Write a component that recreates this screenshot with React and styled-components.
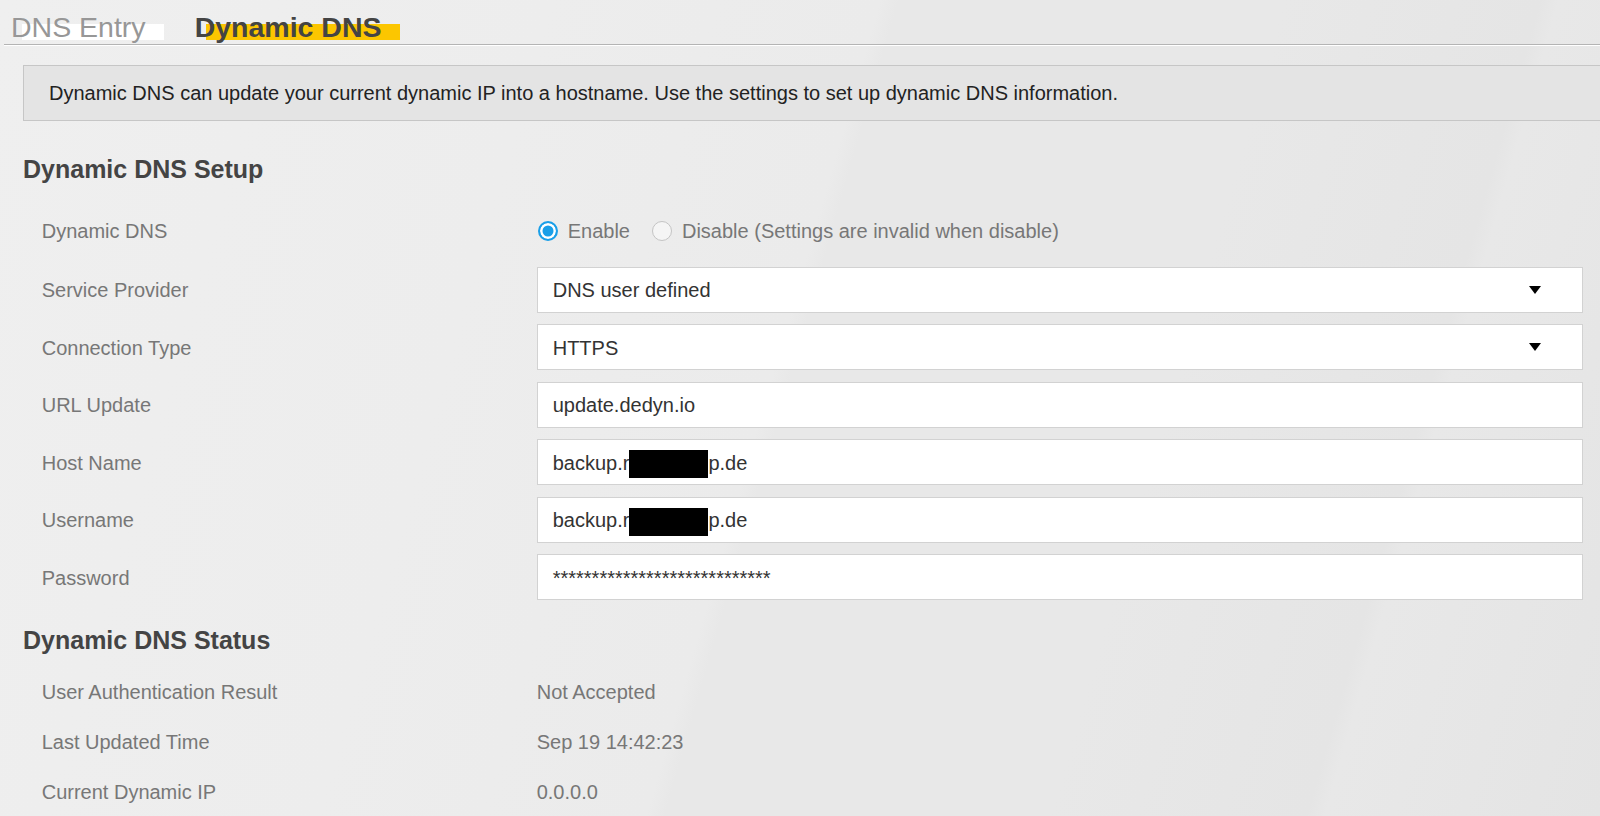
import React from 'react'
import styled, { createGlobalStyle } from 'styled-components'

const GlobalStyle = createGlobalStyle`
  html, body {
    margin: 0;
    padding: 0;
  }
  body {
    overflow: hidden;
    font-family: "Liberation Sans", Arial, sans-serif;
    background: linear-gradient(
      106deg,
      #efefef 0%,
      #ededed 30%,
      #ebebeb 48%,
      #e8e8e8 49%,
      #e8e8e8 70%,
      #e5e5e5 84%,
      #e8e8e8 85%,
      #e4e4e4 100%
    );
    min-height: 816px;
  }
`

const setupRows = [
  { label: 'Service Provider', value: 'DNS user defined', select: true },
  { label: 'Connection Type', value: 'HTTPS', select: true },
  { label: 'URL Update', value: 'update.dedyn.io' },
  { label: 'Host Name', value: ['backup.r', 'p.de'] },
  { label: 'Username', value: ['backup.r', 'p.de'] },
  { label: 'Password', value: '*'.repeat(28) },
]

const statusRows = [
  { label: 'User Authentication Result', value: 'Not Accepted' },
  { label: 'Last Updated Time', value: 'Sep 19 14:42:23' },
  { label: 'Current Dynamic IP', value: '0.0.0.0' },
]

const ArrowIcon = () => (
  <svg width="12" height="8" viewBox="0 0 12 8">
    <polygon points="0,0 12,0 6,8" fill="#000" />
  </svg>
)

const FieldValue = ({ value }) => {
  if (Array.isArray(value)) {
    return (
      <span>
        {value[0]}
        <Redacted />
        {value[1]}
      </span>
    )
  }
  return <span>{value}</span>
}

const App = () => {
  return (
    <Page>
      <GlobalStyle />
      <TabBar>
        <Tab>DNS Entry</Tab>
        <Tab $active>Dynamic DNS</Tab>
      </TabBar>

      <Content>
        <InfoBox>
          Dynamic DNS can update your current dynamic IP into a hostname. Use the settings to set up dynamic DNS information.
        </InfoBox>

        <SectionTitle $top={32.5}>Dynamic DNS Setup</SectionTitle>
        <Form>
          <RadioRow>
            <Label>Dynamic DNS</Label>
            <RadioGroup>
              <RadioOption>
                <Radio $checked />
                Enable
              </RadioOption>
              <RadioOption>
                <Radio />
                Disable (Settings are invalid when disable)
              </RadioOption>
            </RadioGroup>
          </RadioRow>
          {setupRows.map((row) => (
            <Row key={row.label}>
              <Label>{row.label}</Label>
              <Field>
                <FieldValue value={row.value} />
                {row.select && (
                  <Arrow>
                    <ArrowIcon />
                  </Arrow>
                )}
              </Field>
            </Row>
          ))}
        </Form>

        <SectionTitle $top={25}>Dynamic DNS Status</SectionTitle>
        <StatusList>
          {statusRows.map((row) => (
            <StatusRow key={row.label}>
              <Label>{row.label}</Label>
              <StatusValue>{row.value}</StatusValue>
            </StatusRow>
          ))}
        </StatusList>
      </Content>
    </Page>
  )
}

export default App

const Page = styled.div`
  width: 1600px;
  min-height: 816px;
`

const TabBar = styled.div`
  display: flex;
  gap: 49px;
  margin-left: 4px;
  padding-left: 7px;
  border-bottom: 1px solid #b4b4b4;
  box-shadow: 0 1px 0 #ffffff;
`

const Tab = styled.div`
  position: relative;
  z-index: 0;
  height: 34px;
  padding-top: 10px;
  line-height: 34px;
  font-size: 28.5px;
  font-weight: ${(p) => (p.$active ? 'bold' : 'normal')};
  color: ${(p) => (p.$active ? '#444444' : '#979797')};
  cursor: pointer;

  &::before {
    content: '';
    position: absolute;
    z-index: -1;
    left: 11px;
    right: -18px;
    top: 24px;
    height: 16px;
    background: ${(p) => (p.$active ? '#fcc600' : '#ffffff')};
  }
`

const Content = styled.div`
  padding-left: 23px;
`

const InfoBox = styled.div`
  display: flex;
  align-items: center;
  box-sizing: border-box;
  height: 56px;
  margin-top: 20px;
  padding-left: 25px;
  border: 1px solid #c6c6c6;
  border-right: none;
  background: #e4e4e4;
  font-size: 20px;
  color: #222222;
`

const SectionTitle = styled.h2`
  margin: ${(p) => p.$top}px 0 0;
  font-size: 25px;
  line-height: 30px;
  font-weight: bold;
  color: #444444;
`

const Form = styled.div`
  display: flex;
  flex-direction: column;
  gap: 11.5px;
  margin-top: 23.5px;
  margin-right: 17px;
`

const Row = styled.div`
  display: grid;
  grid-template-columns: 513.7px 1fr;
  align-items: center;
  height: 46px;
`

const RadioRow = styled(Row)`
  margin-bottom: 2px;
`

const Label = styled.div`
  padding-left: 18.7px;
  padding-top: 2px;
  font-size: 20px;
  color: #777777;
`

const RadioGroup = styled.div`
  display: flex;
  align-items: center;
  gap: 21px;
  padding-top: 2px;
  font-size: 20px;
  color: #777777;
`

const RadioOption = styled.label`
  display: flex;
  align-items: center;
  gap: 10px;
  cursor: pointer;
`

const Radio = styled.span`
  box-sizing: border-box;
  width: 20px;
  height: 20px;
  margin-left: 1px;
  border-radius: 50%;
  border: ${(p) => (p.$checked ? '2px solid #1a9fe8' : '1px solid #c4c4c4')};
  background: ${(p) => (p.$checked ? '#1a9fe8' : '#f5f5f5')};
  box-shadow: ${(p) => (p.$checked ? 'inset 0 0 0 2.5px #ffffff' : 'none')};
`

const Field = styled.div`
  position: relative;
  display: flex;
  align-items: center;
  box-sizing: border-box;
  height: 46px;
  padding: 2px 15px 0;
  border: 1px solid #d2d2d2;
  background: #ffffff;
  font-size: 20px;
  color: #333333;
  white-space: nowrap;
`

const Redacted = styled.span`
  display: inline-block;
  width: 79px;
  height: 28px;
  margin: -7px 0;
  vertical-align: middle;
  background: #000000;
`

const Arrow = styled.span`
  position: absolute;
  right: 41px;
  top: 50%;
  transform: translateY(-50%);
  display: flex;
`

const StatusList = styled.div`
  display: flex;
  flex-direction: column;
  margin-top: 11px;
`

const StatusRow = styled.div`
  display: grid;
  grid-template-columns: 513.7px 1fr;
  align-items: center;
  height: 50px;
`

const StatusValue = styled.div`
  padding-top: 2px;
  font-size: 20px;
  color: #777777;
`
